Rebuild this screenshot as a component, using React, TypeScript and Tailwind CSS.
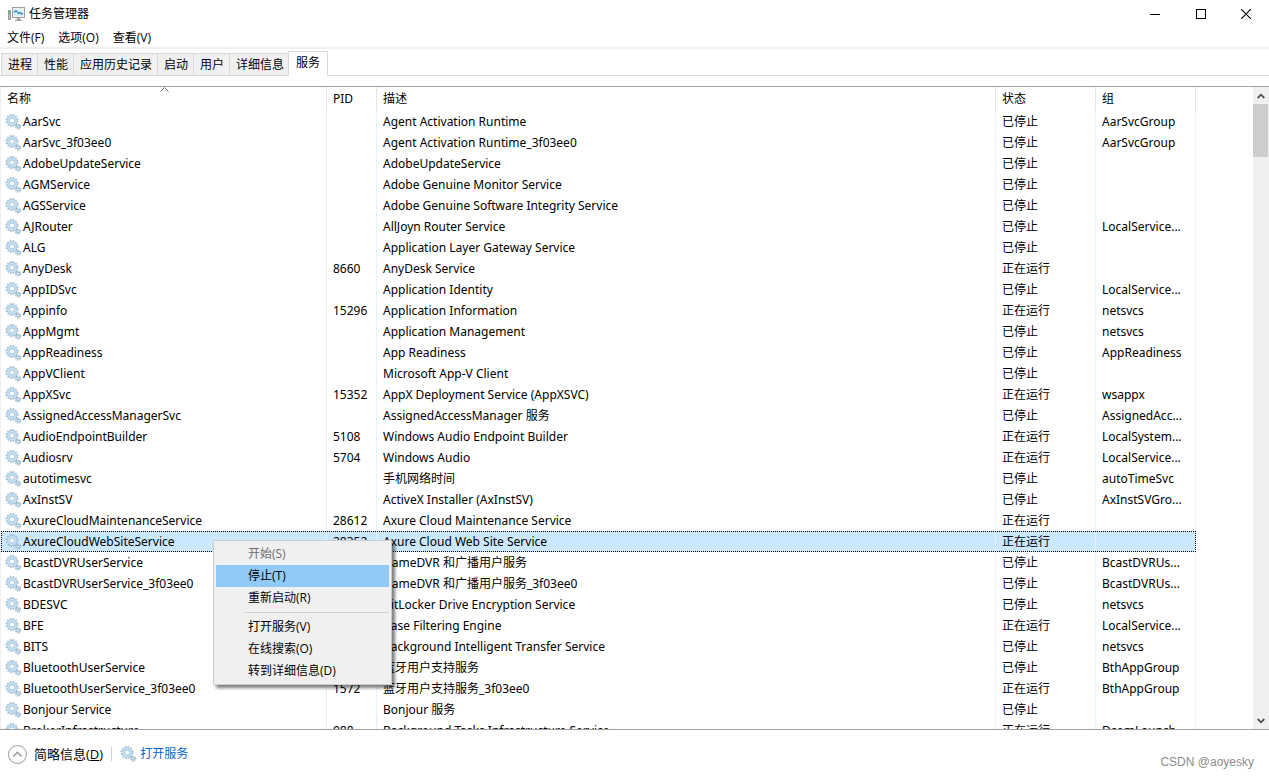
import React from 'react';

type Service = {
  name: string;
  pid?: string;
  description: string;
  running?: boolean;
  group?: string;
};

const services: Service[] = [
  { name: 'AarSvc', description: 'Agent Activation Runtime', group: 'AarSvcGroup' },
  { name: 'AarSvc_3f03ee0', description: 'Agent Activation Runtime_3f03ee0', group: 'AarSvcGroup' },
  { name: 'AdobeUpdateService', description: 'AdobeUpdateService' },
  { name: 'AGMService', description: 'Adobe Genuine Monitor Service' },
  { name: 'AGSService', description: 'Adobe Genuine Software Integrity Service' },
  { name: 'AJRouter', description: 'AllJoyn Router Service', group: 'LocalService...' },
  { name: 'ALG', description: 'Application Layer Gateway Service' },
  { name: 'AnyDesk', pid: '8660', description: 'AnyDesk Service', running: true },
  { name: 'AppIDSvc', description: 'Application Identity', group: 'LocalService...' },
  { name: 'Appinfo', pid: '15296', description: 'Application Information', running: true, group: 'netsvcs' },
  { name: 'AppMgmt', description: 'Application Management', group: 'netsvcs' },
  { name: 'AppReadiness', description: 'App Readiness', group: 'AppReadiness' },
  { name: 'AppVClient', description: 'Microsoft App-V Client' },
  { name: 'AppXSvc', pid: '15352', description: 'AppX Deployment Service (AppXSVC)', running: true, group: 'wsappx' },
  { name: 'AssignedAccessManagerSvc', description: 'AssignedAccessManager 服务', group: 'AssignedAcc...' },
  { name: 'AudioEndpointBuilder', pid: '5108', description: 'Windows Audio Endpoint Builder', running: true, group: 'LocalSystem...' },
  { name: 'Audiosrv', pid: '5704', description: 'Windows Audio', running: true, group: 'LocalService...' },
  { name: 'autotimesvc', description: '手机网络时间', group: 'autoTimeSvc' },
  { name: 'AxInstSV', description: 'ActiveX Installer (AxInstSV)', group: 'AxInstSVGro...' },
  { name: 'AxureCloudMaintenanceService', pid: '28612', description: 'Axure Cloud Maintenance Service', running: true },
  { name: 'AxureCloudWebSiteService', pid: '28352', description: 'Axure Cloud Web Site Service', running: true },
  { name: 'BcastDVRUserService', description: 'GameDVR 和广播用户服务', group: 'BcastDVRUs...' },
  { name: 'BcastDVRUserService_3f03ee0', description: 'GameDVR 和广播用户服务_3f03ee0', group: 'BcastDVRUs...' },
  { name: 'BDESVC', description: 'BitLocker Drive Encryption Service', group: 'netsvcs' },
  { name: 'BFE', description: 'Base Filtering Engine', running: true, group: 'LocalService...' },
  { name: 'BITS', description: 'Background Intelligent Transfer Service', group: 'netsvcs' },
  { name: 'BluetoothUserService', description: '蓝牙用户支持服务', group: 'BthAppGroup' },
  { name: 'BluetoothUserService_3f03ee0', pid: '1572', description: '蓝牙用户支持服务_3f03ee0', running: true, group: 'BthAppGroup' },
  { name: 'Bonjour Service', description: 'Bonjour 服务' },
  { name: 'BrokerInfrastructure', pid: '988', description: 'Background Tasks Infrastructure Service', running: true, group: 'DcomLaunch' },
];

const selectedName = 'AxureCloudWebSiteService';

const tabs = ['进程', '性能', '应用历史记录', '启动', '用户', '详细信息', '服务'];
const activeTab = '服务';

const GearsIcon = () => (
  <svg width="16" height="16" viewBox="0 0 16 16" className="shrink-0" aria-hidden="true">
    <circle cx="7" cy="6.5" r="5.7" fill="none" stroke="#9dbdd3" strokeWidth="1.5" strokeDasharray="1.6 1.38" />
    <circle cx="7" cy="6.5" r="4.9" fill="none" stroke="#92b4cc" strokeWidth="0.8" />
    <circle cx="7" cy="6.5" r="3.7" fill="#fff" stroke="#c3e2f5" strokeWidth="2" />
    <circle cx="7" cy="6.5" r="2.6" fill="#fff" stroke="#8fb3cb" strokeWidth="0.8" />
    <circle cx="13" cy="12.5" r="2.5" fill="none" stroke="#8fa9bc" strokeWidth="1.1" strokeDasharray="1.1 0.86" />
    <circle cx="13" cy="12.5" r="1.4" fill="#fff" stroke="#9fc0d6" strokeWidth="1.2" />
  </svg>
);

const TaskManagerIcon = () => (
  <svg width="17" height="16" viewBox="0 0 17 16" aria-hidden="true">
    <rect x="0.5" y="4.5" width="2" height="9" fill="#b9bdbf" stroke="#9a9fa3" />
    <rect x="1" y="5" width="1" height="3" fill="#5cb85c" />
    <rect x="4.5" y="1.5" width="12" height="10" fill="#eceeef" stroke="#9b9fa2" />
    <rect x="6" y="3" width="9" height="7" fill="#d5f1fc" />
    <path d="M6 6.5 8 4.5l2.5 3 1.5-1 1.500 1.500L15 7.500" fill="none" stroke="#2a7fb0" strokeWidth="1.1" />
    <path d="M9 12h3v1.500h2V15H7v-1.500h2z" fill="#a3a7aa" />
  </svg>
);

const MenuItem = ({ label, className = '', disabled = false }: { label: string; className?: string; disabled?: boolean }) => (
  <button
    role="menuitem"
    disabled={disabled}
    className={`block h-[22px] w-full pl-8 text-left leading-[22px] ${className}`}
  >
    {label}
  </button>
);

const ContextMenu = () => (
  <div
    role="menu"
    className="absolute left-[213px] top-[540px] w-[179px] border border-[#ccc] bg-[#f0f0f0] p-0.5 shadow-[3px_3px_3px_rgba(0,0,0,0.5)] font-['Open_Sans','Noto_Sans_CJK_SC',sans-serif]"
  >
    <MenuItem label="开始(S)" disabled className="text-[#6d6d6d]" />
    <MenuItem label="停止(T)" className="bg-[#91c9f7]" />
    <MenuItem label="重新启动(R)" />
    <hr className="my-[3px] ml-7 border-[#d0d0d0]" />
    <MenuItem label="打开服务(V)" />
    <MenuItem label="在线搜索(O)" />
    <MenuItem label="转到详细信息(D)" />
  </div>
);

const ServiceRow = ({ service }: { service: Service }) => {
  const selected = service.name === selectedName;
  const cell = 'truncate border-r border-[#e5f1fb] px-1.5 py-0';
  return (
    <tr
      className={`h-[21px] ${selected ? 'bg-[#cce8ff] outline-1 -outline-offset-1 outline-dotted outline-black' : ''}`}
    >
      <td className="truncate border-r border-[#e5f1fb] py-0 pl-1">
        <div className="flex items-center gap-0.5">
          <GearsIcon />
          <span>{service.name}</span>
        </div>
      </td>
      <td className={cell}>{service.pid}</td>
      <td className={cell}>{service.description}</td>
      <td className={cell}>{service.running ? '正在运行' : '已停止'}</td>
      <td className={cell}>{service.group}</td>
    </tr>
  );
};

const App = () => {
  const head = 'h-6 border-r border-[#e5e5e5] px-1.5 py-0 text-left font-normal';

  return (
    <div className="relative flex h-screen flex-col overflow-hidden bg-white font-['Noto_Sans','Noto_Sans_CJK_SC',sans-serif] text-[12px] leading-5 text-black">
      {/* Title bar */}
      <header className="flex h-7 shrink-0 items-center justify-between">
        <div className="flex items-center gap-1 pl-2">
          <TaskManagerIcon />
          <h1>任务管理器</h1>
        </div>
        <div className="flex">
          <button aria-label="最小化" className="flex h-[26px] w-[46px] items-center justify-center">
            <svg width="10" height="10" shapeRendering="crispEdges"><path d="M0 5.5h10" stroke="#000" /></svg>
          </button>
          <button aria-label="最大化" className="flex h-[26px] w-[45px] items-center justify-center">
            <svg width="10" height="10" shapeRendering="crispEdges"><path d="M.5.5h9v9h-9z" fill="none" stroke="#000" /></svg>
          </button>
          <button aria-label="关闭" className="flex h-[26px] w-[46px] items-center justify-center">
            <svg width="10" height="10"><path d="M0 0 10 10M10 0 0 10" stroke="#000" strokeWidth="1.1" /></svg>
          </button>
        </div>
      </header>

      {/* Menu bar */}
      <nav className="flex h-[21px] shrink-0 items-center gap-3.5 border-b-2 border-[#f0f0f0] pl-[7px] font-['Open_Sans','Noto_Sans_CJK_SC',sans-serif]">
        <button>文件(F)</button>
        <button>选项(O)</button>
        <button>查看(V)</button>
      </nav>

      {/* Tabs */}
      <div role="tablist" className="flex h-[27px] shrink-0 items-end border-b border-[#d9d9d9] pl-px">
        {tabs.map((tab) =>
          tab === activeTab ? (
            <button
              key={tab}
              role="tab"
              aria-selected
              className="z-10 -mb-px -ml-px h-[25px] border border-b-0 border-[#d9d9d9] bg-white px-[7px] pb-0.5"
            >
              {tab}
            </button>
          ) : (
            <button
              key={tab}
              role="tab"
              aria-selected={false}
              className="h-[22px] border-l border-t border-[#d9d9d9] bg-[#f0f0f0] pl-1.5 pr-[5px]"
            >
              {tab}
            </button>
          )
        )}
      </div>

      {/* Service list */}
      <main className="mt-2.5 flex min-h-0 flex-1 border-y border-[#a0a0a0]">
        <div className="min-w-0 flex-1 overflow-hidden border-l border-[#f0f0f0] pr-[57px]">
          <table className="w-full table-fixed border-separate border-spacing-0">
            <colgroup>
              <col className="w-[326px]" />
              <col className="w-[50px]" />
              <col />
              <col className="w-[100px]" />
              <col className="w-[100px]" />
            </colgroup>
            <thead>
              <tr>
                <th className={`relative ${head}`} aria-sort="ascending">
                  名称
                  <svg width="9" height="5" viewBox="0 0 9 5" className="absolute left-[159px] top-0">
                    <path d="M.5 4.5 4.5.5l4 4" fill="none" stroke="#6d6d6d" />
                  </svg>
                </th>
                <th className={head}>PID</th>
                <th className={head}>描述</th>
                <th className={head}>状态</th>
                <th className={head}>组</th>
              </tr>
            </thead>
            <tbody>
              {services.map((service) => (
                <ServiceRow key={service.name} service={service} />
              ))}
            </tbody>
          </table>
        </div>

        <div className="flex w-4 shrink-0 flex-col bg-[#f0f0f0]">
          <button aria-label="向上滚动" className="flex h-[17px] items-center justify-center">
            <svg width="8" height="6" viewBox="0 0 8 6"><path d="M.7 5 4 1.7 7.3 5" fill="none" stroke="#505050" strokeWidth="1.8" /></svg>
          </button>
          <div className="mr-px h-[53px] bg-[#cdcdcd]" />
          <button aria-label="向下滚动" className="mt-auto flex h-[17px] items-center justify-center">
            <svg width="8" height="6" viewBox="0 0 8 6"><path d="M.7 1 4 4.3 7.3 1" fill="none" stroke="#505050" strokeWidth="1.8" /></svg>
          </button>
        </div>
      </main>

      {/* Footer */}
      <footer className="flex h-12 shrink-0 items-center pl-2">
        <button className="flex items-center gap-[7px]">
          <svg width="19" height="19" viewBox="0 0 19 19">
            <circle cx="9.5" cy="9.5" r="9" fill="#fff" stroke="#9a9a9a" />
            <path d="M5.3 11.5 9.5 7.3l4.2 4.2" fill="none" stroke="#9a9a9a" strokeWidth="1.6" />
          </svg>
          <span className="font-['Open_Sans','Noto_Sans_CJK_SC',sans-serif] text-[13px]">
            简略信息(<u>D</u>)
          </span>
        </button>
        <span className="ml-2 h-3.5 w-px bg-[#d0d0d0]" />
        <a href="#services" className="ml-2 flex items-center gap-1 text-[#0066cc]">
          <GearsIcon />
          打开服务
        </a>
        <span className="ml-auto mt-4 pr-[15px] font-['Liberation_Sans',sans-serif] text-[12px] text-[#8c8c8c]">
          CSDN @aoyesky
        </span>
      </footer>

      <ContextMenu />
    </div>
  );
};

export default App;
